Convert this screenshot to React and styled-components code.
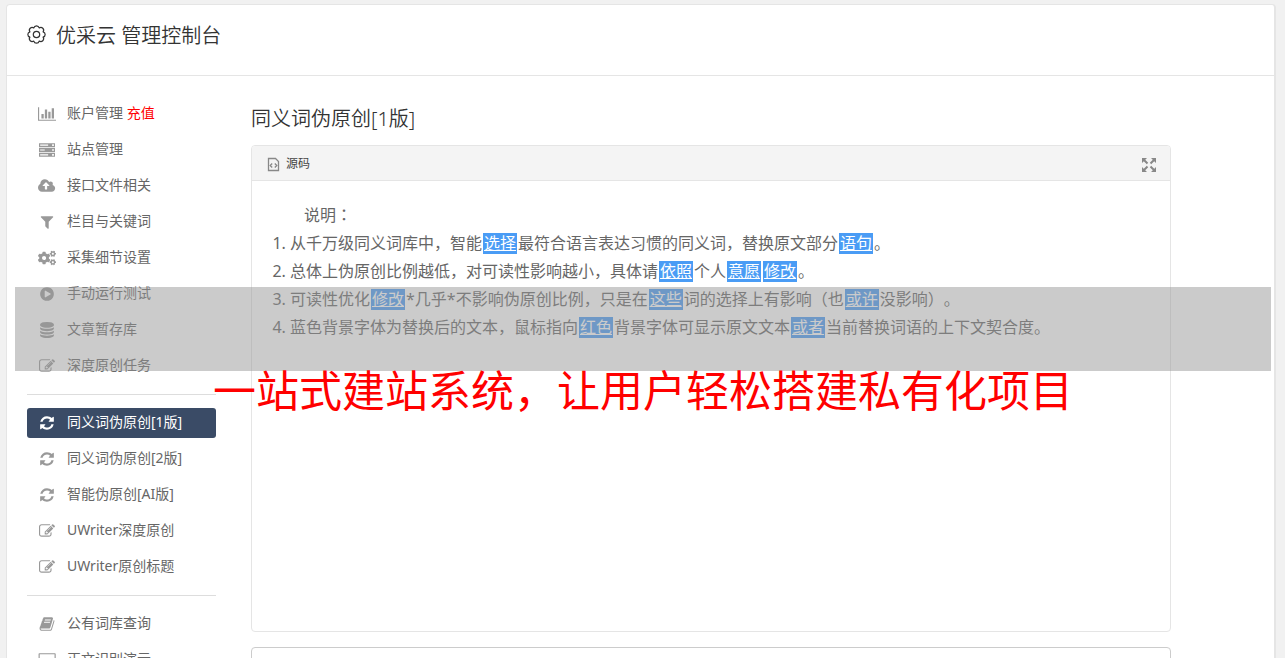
import styled, { createGlobalStyle } from "styled-components"
import { FaCogs } from "react-icons/fa";

const GlobalStyle = createGlobalStyle`
  * {
    box-sizing: border-box;
  }
  html {
    scrollbar-width: none;
  }
  body {
    margin: 0;
    background-color: #f1f1f1;
    color: #333;
    font-family: "Noto Sans", "Noto Sans CJK SC", sans-serif;
    font-size: 14px;
    font-weight: 400;
    text-spacing-trim: space-all;
  }
`;

const Page = styled.div`
  position: relative;
  padding: 4px 9px 20px 6px;
`;

const Card = styled.div`
  background-color: #fff;
  border: 1px solid #e5e5e5;
  border-right-width: 2px;
  border-radius: 4px;
`;

const Header = styled.header`
  display: flex;
  align-items: flex-start;
  gap: 10px;
  height: 71px;
  padding: 16px 20px;
  border-bottom: 1px solid #e5e5e5;
  svg {
    margin-top: 4px;
  }
`;

const PageTitle = styled.h1`
  margin: 0;
  font-size: 20px;
  line-height: 30px;
  font-weight: 350;
`;

const Columns = styled.div`
  display: flex;
  align-items: flex-start;
  gap: 35px;
  padding: 23px 20px;
`;

const Sidebar = styled.nav`
  flex: 0 0 189px;
`;

const Divider = styled.hr`
  margin: 13px 0;
  border: 0;
  border-top: 1px solid #ddd;
`;

const NavLink = styled.a`
  display: flex;
  align-items: center;
  height: 30px;
  margin-bottom: 6px;
  padding: 0 10px;
  gap: 10px;
  border-radius: 3px;
  line-height: 28px;
  white-space: nowrap;
  text-decoration: none;
  color: ${props => props.$active ? '#fff' : '#666'};
  background-color: ${props => props.$active ? '#3a4b66' : 'transparent'};
`;

const NavLabel = styled.span`
  padding-bottom: 2px;
`;

const NavIcon = styled.span`
  display: flex;
  justify-content: center;
  width: 20px;
  color: ${props => props.$active ? '#fff' : '#999'};
`;

const Recharge = styled.span`
  color: #f00;
`;

const Main = styled.main`
  flex: 1;
  min-width: 0;
  max-width: 920px;
`;

const SectionTitle = styled.h2`
  margin: 5px 0 11px;
  font-size: 20px;
  line-height: 30px;
  font-weight: 350;
`;

const Editor = styled.section`
  border: 1px solid #e5e5e5;
  border-radius: 4px;
  overflow: hidden;
`;

const Toolbar = styled.div`
  display: flex;
  align-items: center;
  justify-content: space-between;
  height: 35px;
  padding: 0 14px 0 15px;
  background-color: #f4f4f4;
  border-bottom: 1px solid #e5e5e5;
`;

const ToolButton = styled.button`
  display: flex;
  align-items: center;
  gap: 6px;
  padding: 0;
  border: 0;
  background: none;
  font: inherit;
  font-size: 12px;
  color: #444;
  cursor: pointer;
  svg {
    margin-top: 3px;
  }
`;

const EditorBody = styled.div`
  min-height: 450px;
  padding: 19px 20px;
  font-size: 16px;
  line-height: 28px;
  color: #666;
`;

const Intro = styled.p`
  margin: 0;
  text-indent: 2em;
`;

const Colon = styled.span`
  font-family: "Noto Sans CJK TC", sans-serif;
`;

const Rules = styled.ol`
  margin: 0;
  padding-left: 18px;
`;

const Word = styled.u`
  display: inline-block;
  height: 21px;
  margin: 0 1px;
  padding: 0 1px;
  line-height: 21px;
  background-color: #4a9cf5;
  color: #fff;
`;

const ResultBox = styled.textarea`
  display: block;
  width: 100%;
  height: 120px;
  margin-top: 15px;
  padding: 10px;
  border: 1px solid #ccc;
  border-radius: 4px;
  font: inherit;
  resize: none;
`;

const Banner = styled.div`
  position: absolute;
  top: 287px;
  left: 15px;
  right: 14px;
  height: 84px;
  padding-top: 72px;
  background-color: rgba(149, 149, 149, 0.49);
  color: #f00;
  font-size: 43px;
  line-height: 64px;
  text-align: center;
  white-space: nowrap;
  pointer-events: none;
`;

const ICONS = {
  chart: { w: 2048, d: "M640 896v512h-256v-512h256zm384-512v1024h-256v-1024h256zm1024 1152v128h-2048v-1536h128v1408h1920zm-640-896v768h-256v-768h256zm384-384v1152h-256v-1152h256z" },
  server: { w: 1792, d: "M0 128h1792v448h-1792zM128 288v128h896v-128zM1472 256v192h192v-192zM0 672h1792v448h-1792zM128 832v128h512v-128zM1472 800v192h192v-192zM0 1216h1792v448h-1792zM128 1376v128h896v-128zM1472 1344v192h192v-192z" },
  cloud: { w: 1920, d: "M1280 864q0-14-9-23l-352-352q-9-9-23-9t-23 9l-351 351q-10 12-10 24 0 14 9 23t23 9h224v352q0 13 9.5 22.5t22.5 9.5h192q13 0 22.5-9.5t9.5-22.5v-352h224q13 0 22.5-9.5t9.5-22.5zm640 288q0 159-112.5 271.5t-271.5 112.5h-1088q-185 0-316.5-131.5t-131.5-316.5q0-130 70-240t188-165q-2-30-2-43 0-212 150-362t362-150q156 0 285.5 87t188.5 231q71-62 166-62 106 0 181 75t75 181q0 76-41 138 130 31 213.5 135.5t83.5 238.5z" },
  filter: { w: 1792, d: "M1595 295q17 41-14 70l-493 493v742q0 42-39 59-13 5-25 5-27 0-45-19l-256-256q-19-19-19-45v-486l-493-493q-31-29-14-70 17-39 59-39h1280q42 0 59 39z" },
  play: { w: 1792, d: "M896 128q209 0 385.5 103t279.5 279.5 103 385.5-103 385.5-279.5 279.5-385.5 103-385.5-103-279.5-279.5-103-385.5 103-385.5 279.5-279.5 385.5-103zm384 823q32-18 32-55t-32-55l-544-320q-31-19-64-1-32 19-32 56v640q0 37 32 56 16 8 32 8 17 0 32-9z" },
  database: { w: 1792, d: "M896 768q237 0 443-43t325-127v170q0 69-103 128t-280 93.5-385 34.5-385-34.5-280-93.5-103-128v-170q119 84 325 127t443 43zm0 768q237 0 443-43t325-127v170q0 69-103 128t-280 93.5-385 34.5-385-34.5-280-93.5-103-128v-170q119 84 325 127t443 43zm0-384q237 0 443-43t325-127v170q0 69-103 128t-280 93.5-385 34.5-385-34.5-280-93.5-103-128v-170q119 84 325 127t443 43zm0-1152q208 0 385 34.5t280 93.5 103 128v128q0 69-103 128t-280 93.5-385 34.5-385-34.5-280-93.5-103-128v-128q0-69 103-128t280-93.5 385-34.5z" },
  edit: { w: 1792, d: "M888 1184l116-116-152-152-116 116v56h96v96h56zm440-720q-16-16-33 1l-350 350q-17 17-1 33t33-1l350-350q17-17 1-33zm80 594v190q0 119-84.5 203.5t-203.5 84.5h-832q-119 0-203.5-84.5t-84.5-203.5v-832q0-119 84.5-203.5t203.5-84.5h832q63 0 117 25 15 7 18 23 3 17-9 29l-49 49q-14 14-32 8-23-6-45-6h-832q-66 0-113 47t-47 113v832q0 66 47 113t113 47h832q66 0 113-47t47-113v-126q0-13 9-22l64-64q15-15 35-7t20 29zm-96-738l288 288-672 672h-288v-288zm444 132l-92 92-288-288 92-92q28-28 68-28t68 28l152 152q28 28 28 68t-28 68z" },
  refresh: { w: 1792, d: "M1639 1056q0 5-1 7-64 268-268 434.5t-478 166.5q-146 0-282.5-55t-243.5-157l-129 129q-19 19-45 19t-45-19-19-45v-448q0-26 19-45t45-19h448q26 0 45 19t19 45-19 45l-137 137q71 66 161 102t187 36q134 0 250-65t186-179q11-17 53-117 8-23 30-23h192q13 0 22.5 9.5t9.5 22.5zm25-800v448q0 26-19 45t-45 19h-448q-26 0-45-19t-19-45 19-45l138-138q-148-137-349-137-134 0-250 65t-186 179q-11 17-53 117-8 23-30 23h-199q-13 0-22.5-9.5t-9.5-22.5v-7q65-268 270-434.5t480-166.5q146 0 284 55.5t245 156.5l130-129q19-19 45-19t45 19 19 45z" },
  book: { w: 1792, d: "M1703 478q40 57 18 129l-275 906q-19 64-76.5 107.5t-122.5 43.5h-923q-77 0-148.5-53.5t-99.5-131.5q-24-67-2-127 0-4 3-27t4-37q1-8-3-21.5t-3-19.5q2-11 8-21t16.5-23.5 16.5-23.5q23-38 45-91.5t30-91.5q3-10 .5-30t-.5-28q3-11 17-28t17-23q21-36 42-92t25-90q1-9-2.5-32t.5-28q4-13 22-30.5t22-22.5q19-26 42.5-84.5t27.5-96.5q1-8-3-25.5t-2-26.5q2-8 9-18t18-23 17-21q8-12 16.5-30.5t15-35 16-36 19.5-32 26.5-23.5 36-11.5 47.5 5.5l-1 3q38-9 51-9h761q74 0 114 56t18 130l-274 906q-36 119-71.5 153.5t-128.5 34.5h-869q-27 0-38 15-11 16-1 43 24 70 144 70h923q29 0 56-15.5t35-41.5l300-987q7-22 5-57 38 15 59 43zm-1064 2q-4 13 2 22.5t20 9.5h608q13 0 25.5-9.5t16.5-22.5l21-64q4-13-2-22.5t-20-9.5h-608q-13 0-25.5 9.5t-16.5 22.5zm-83 256q-4 13 2 22.5t20 9.5h608q13 0 25.5-9.5t16.5-22.5l21-64q4-13-2-22.5t-20-9.5h-608q-13 0-25.5 9.5t-16.5 22.5z" },
  desktop: { w: 2048, d: "M160 128h1728q96 0 96 96v1088q0 96-96 96h-704v128h256v128h-832v-128h256v-128h-704q-96 0-96-96v-1088q0-96 96-96zM192 256v1024h1664v-1024z" },
};

function Icon({name}) {
  if (name === 'cogs') {
    return <FaCogs size={18} />
  }
  const {w, d} = ICONS[name];
  return (
    <svg width={w / 112} height="16" viewBox={`0 0 ${w} 1792`} fill="currentColor" fillRule="evenodd">
      <path d={d} />
    </svg>
  )
}

// ring with eight rounded lobes
function GearIcon() {
  return (
    <svg width="19" height="19" viewBox="-9.500 -9.500 19 19" fill="none" stroke="#333" strokeWidth="1.200" strokeLinejoin="round">
      <path d="M-2.700 -6.600A2.800 2.800 0 0 1 2.700 -6.600A2.800 2.800 0 0 1 6.600 -2.700A2.800 2.800 0 0 1 6.600 2.700A2.800 2.800 0 0 1 2.700 6.600A2.800 2.800 0 0 1 -2.700 6.600A2.800 2.800 0 0 1 -6.600 2.700A2.800 2.800 0 0 1 -6.600 -2.700A2.800 2.800 0 0 1 -2.700 -6.600z" />
      <circle r="3.200" />
    </svg>
  )
}

function SourceIcon() {
  return (
    <svg width="13" height="15" viewBox="0 0 13 15" fill="none" stroke="#888" strokeWidth="1.300">
      <path d="M1.500 1.500h7l3 3v9h-10z" />
      <path d="M5.200 6.500l-2 2 2 2M7.800 6.500l2 2-2 2" />
    </svg>
  )
}

function ExpandIcon() {
  return (
    <svg width="14" height="14" viewBox="0 0 14 14" fill="#888" stroke="#888">
      <path stroke="none" d="M0 0h5L0 5zM9 0h5v5zM0 9v5h5zM14 9v5H9z" />
      <path strokeWidth="2" d="M2 2l3.500 3.500M12 2L8.500 5.500M2 12l3.500-3.500M12 12L8.500 8.500" />
    </svg>
  )
}

const groups = [
  [
    {icon: 'chart', label: '账户管理', extra: '充值'},
    {icon: 'server', label: '站点管理'},
    {icon: 'cloud', label: '接口文件相关'},
    {icon: 'filter', label: '栏目与关键词'},
    {icon: 'cogs', label: '采集细节设置'},
    {icon: 'play', label: '手动运行测试'},
    {icon: 'database', label: '文章暂存库'},
    {icon: 'edit', label: '深度原创任务'},
  ],
  [
    {icon: 'refresh', label: '同义词伪原创[1版]', active: true},
    {icon: 'refresh', label: '同义词伪原创[2版]'},
    {icon: 'refresh', label: '智能伪原创[AI版]'},
    {icon: 'edit', label: 'UWriter深度原创'},
    {icon: 'edit', label: 'UWriter原创标题'},
  ],
  [
    {icon: 'book', label: '公有词库查询'},
    {icon: 'desktop', label: '正文识别演示'},
  ],
];

function NavItem({icon,label,extra,active}) {
  return (
    <NavLink href="#" $active={active}>
      <NavIcon $active={active}><Icon name={icon} /></NavIcon>
      <NavLabel>{label}{extra && <Recharge> {extra}</Recharge>}</NavLabel>
    </NavLink>
  )
}

export default function App() {
  return (
    <Page>
      <GlobalStyle />
      <Card>
        <Header>
          <GearIcon />
          <PageTitle>优采云 管理控制台</PageTitle>
        </Header>
        <Columns>
          <Sidebar>
            {groups.map((items, i) => (
              <div key={i}>
                {i > 0 && <Divider />}
                {items.map(item => <NavItem key={item.label} {...item} />)}
              </div>
            ))}
          </Sidebar>
          <Main>
            <SectionTitle>同义词伪原创[1版]</SectionTitle>
            <Editor>
              <Toolbar>
                <ToolButton type="button"><SourceIcon />源码</ToolButton>
                <ToolButton type="button" aria-label="全屏"><ExpandIcon /></ToolButton>
              </Toolbar>
              <EditorBody>
                <Intro>说明<Colon>：</Colon></Intro>
                <Rules>
                  <li>从千万级同义词库中，智能<Word>选择</Word>最符合语言表达习惯的同义词，替换原文部分<Word>语句</Word>。</li>
                  <li>总体上伪原创比例越低，对可读性影响越小，具体请<Word>依照</Word>个人<Word>意愿</Word><Word>修改</Word>。</li>
                  <li>可读性优化<Word>修改</Word>*几乎*不影响伪原创比例，只是在<Word>这些</Word>词的选择上有影响（也<Word>或许</Word>没影响）。</li>
                  <li>蓝色背景字体为替换后的文本，鼠标指向<Word>红色</Word>背景字体可显示原文文本<Word>或者</Word>当前替换词语的上下文契合度。</li>
                </Rules>
              </EditorBody>
            </Editor>
            <ResultBox aria-label="结果" />
          </Main>
        </Columns>
      </Card>
      <Banner>一站式建站系统，让用户轻松搭建私有化项目</Banner>
    </Page>
  )
}
